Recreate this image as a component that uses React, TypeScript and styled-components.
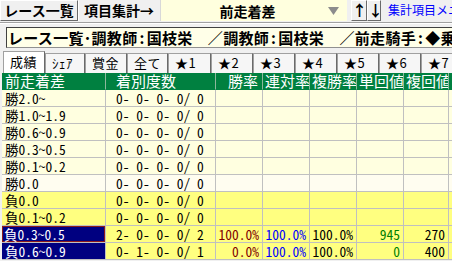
import styled, { createGlobalStyle } from "styled-components";

const GlobalStyle = createGlobalStyle`
  html, body {
    margin: 0;
    background: #f0f0f0;
    font-family: "Noto Sans CJK JP", sans-serif;
  }
`;

interface Row {
  label: string;
  counts: string;
  win?: string;
  quinella?: string;
  place?: string;
  winReturn?: string;
  placeReturn?: string;
  tone: "cream" | "light" | "yellow";
  selected?: boolean;
  focused?: boolean;
}

const rows: Row[] = [
  { label: "勝2.0〜", counts: "0- 0- 0- 0/ 0", tone: "cream" },
  { label: "勝1.0〜1.9", counts: "0- 0- 0- 0/ 0", tone: "cream" },
  { label: "勝0.6〜0.9", counts: "0- 0- 0- 0/ 0", tone: "cream" },
  { label: "勝0.3〜0.5", counts: "0- 0- 0- 0/ 0", tone: "cream" },
  { label: "勝0.1〜0.2", counts: "0- 0- 0- 0/ 0", tone: "cream" },
  { label: "勝0.0", counts: "0- 0- 0- 0/ 0", tone: "light" },
  { label: "負0.0", counts: "0- 0- 0- 0/ 0", tone: "yellow" },
  { label: "負0.1〜0.2", counts: "0- 0- 0- 0/ 0", tone: "yellow" },
  {
    label: "負0.3〜0.5",
    counts: "2- 0- 0- 0/ 2",
    win: "100.0%",
    quinella: "100.0%",
    place: "100.0%",
    winReturn: "945",
    placeReturn: "270",
    tone: "yellow",
    selected: true,
    focused: true,
  },
  {
    label: "負0.6〜0.9",
    counts: "0- 1- 0- 0/ 1",
    win: "0.0%",
    quinella: "100.0%",
    place: "100.0%",
    winReturn: "0",
    placeReturn: "400",
    tone: "yellow",
    selected: true,
  },
];

const tabs = [
  { name: "成績", width: 42 },
  { name: "ｼｪｱ", width: 40 },
  { name: "賞金", width: 42 },
  { name: "全て", width: 41 },
  { name: "★1", width: 43 },
  { name: "★2", width: 42 },
  { name: "★3", width: 42 },
  { name: "★4", width: 42 },
  { name: "★5", width: 42 },
  { name: "★6", width: 42 },
  { name: "★7", width: 42 },
];

const headers = [
  { name: "前走着差", indent: 3 },
  { name: "着別度数", indent: 10 },
  { name: "勝率", indent: 12 },
  { name: "連対率", indent: 2 },
  { name: "複勝率", indent: 2 },
  { name: "単回値", indent: 2 },
  { name: "複回値", indent: 2 },
  { name: "", indent: 0 },
];

const conditions = [
  ["調教師", "国枝栄"],
  ["調教師", "国枝栄"],
  ["前走騎手", "◆乗り替わり"],
];

const toneColor = {
  cream: "#ffffe0",
  light: "#fffdf0",
  yellow: "#ffff80",
};

const App = () => {
  return (
    <Page>
      <GlobalStyle />
      <TopBar>
        <ToolButton $width={78}>レース一覧</ToolButton>
        <FlatButton $width={82}>項目集計→</FlatButton>
        <Select>
          <SelectText>前走着差</SelectText>
          <svg width="11" height="8" viewBox="0 0 11 8">
            <polygon points="0,0 11,0 5.5,8" fill="#8c8c8c" />
          </svg>
        </Select>
        <ArrowButton $width={16}>↑</ArrowButton>
        <ArrowButton $width={14}>↓</ArrowButton>
        <MenuLink>集計項目メニュー</MenuLink>
      </TopBar>
      <Rule />
      <TitleBox>
        レース一覧･
        {conditions.map(([key, value], index) => (
          <span key={index}>
            {index > 0 && "　／"}
            {key}
            <Colon>:</Colon>
            {value}
          </span>
        ))}
      </TitleBox>
      <TabStrip>
        {tabs.map((tab, index) => (
          <Tab key={tab.name} $width={tab.width} $active={index === 0}>
            {tab.name}
          </Tab>
        ))}
      </TabStrip>
      <Grid>
        {headers.map((header, index) => (
          <HeaderCell key={`h-${index}`} $indent={header.indent}>
            {header.name}
          </HeaderCell>
        ))}
        {rows.map((row) => (
          <RowCells key={row.label} row={row} />
        ))}
      </Grid>
    </Page>
  );
};

const RowCells = ({ row }: { row: Row }) => {
  const bg = toneColor[row.tone];
  return (
    <>
      <LabelCell $bg={bg} $selected={!!row.selected} $focused={!!row.focused}>
        {row.label}
      </LabelCell>
      <CountCell $bg={bg}>{row.counts}</CountCell>
      <ValueCell $bg={bg} $color="#800000">{row.win}</ValueCell>
      <ValueCell $bg={bg} $color="#0000ff">{row.quinella}</ValueCell>
      <ValueCell $bg={bg} $color="#000000">{row.place}</ValueCell>
      <ValueCell $bg={bg} $color="#008000">{row.winReturn}</ValueCell>
      <ValueCell $bg={bg} $color="#000000">{row.placeReturn}</ValueCell>
      <ValueCell $bg={bg} $color="#000000" />
    </>
  );
};

const Page = styled.div`
  width: 452px;
  height: 261px;
  overflow: hidden;
`;

const TopBar = styled.div`
  display: flex;
  height: 21px;
  align-items: stretch;
  white-space: nowrap;
  overflow: hidden;
`;

const ToolButton = styled.div<{ $width: number }>`
  width: ${(p) => p.$width}px;
  flex: none;
  box-sizing: border-box;
  border: 1px solid;
  border-color: #ffffff #6a6a6a #6a6a6a #ffffff;
  background: #f0f0f0;
  font-size: 14px;
  font-weight: bold;
  line-height: 19px;
  text-align: center;
  color: #000;
`;

const FlatButton = styled(ToolButton)`
  border-color: #f0f0f0 #f0f0f0 #f0f0f0 #ffffff;
`;

const Select = styled.div`
  width: 187px;
  flex: none;
  box-sizing: border-box;
  display: flex;
  align-items: center;
  padding: 0 8px 0 10px;
  background: #ffffde;
  border-left: 1px solid #d8d8d8;
  svg {
    flex: none;
  }
`;

const SelectText = styled.span`
  flex: 1;
  text-align: center;
  font-size: 14px;
  font-weight: bold;
  color: #000;
  padding-right: 4px;
`;

const ArrowButton = styled(ToolButton)`
  margin-left: ${(p) => (p.$width === 16 ? 4 : 0)}px;
  font-size: 15px;
  line-height: 18px;
`;

const MenuLink = styled.span`
  margin-left: 7px;
  font-size: 12px;
  line-height: 20px;
  color: #0000ff;
`;

const Rule = styled.div`
  margin-top: 1px;
  border-top: 1px solid #a0a0a0;
  border-bottom: 1px solid #ffffff;
`;

const TitleBox = styled.div`
  margin: 3px 0 0 6px;
  height: 21px;
  box-sizing: border-box;
  border: 1px solid #404040;
  border-right: none;
  border-bottom-color: #909090;
  background: #ffffe8;
  padding-left: 1px;
  font-size: 15px;
  font-weight: bold;
  line-height: 19px;
  letter-spacing: 0.3px;
  white-space: nowrap;
  overflow: hidden;
  color: #000;
`;

const Colon = styled.span`
  padding: 0 2px;
`;

const TabStrip = styled.div`
  display: flex;
  align-items: flex-end;
  height: 22px;
  margin-top: 3px;
  padding-left: 3px;
  white-space: nowrap;
  overflow: hidden;
`;

const Tab = styled.div<{ $width: number; $active: boolean }>`
  width: ${(p) => p.$width}px;
  flex: none;
  box-sizing: border-box;
  height: ${(p) => (p.$active ? 22 : 20)}px;
  border: 1px solid #a0a0a0;
  border-bottom: none;
  border-right-color: #6a6a6a;
  background: ${(p) => (p.$active ? "#ffffff" : "#f6f6f6")};
  padding-left: 6px;
  font-size: 13px;
  line-height: ${(p) => (p.$active ? 19 : 18)}px;
  letter-spacing: 0.5px;
  color: #000;
`;

const Grid = styled.div`
  display: grid;
  grid-template-columns: 104px 110px 47px 47px 47px 47px 45px 1fr;
  grid-auto-rows: 17px;
  margin-left: 2px;
  font-feature-settings: "hwid";
`;

const Cell = styled.div`
  box-sizing: border-box;
  border-right: 1px solid #c0c0c0;
  border-bottom: 1px solid #c0c0c0;
  overflow: hidden;
  white-space: pre;
  font-size: 13.5px;
  line-height: 16px;
  color: #000;
`;

const HeaderCell = styled(Cell)<{ $indent: number }>`
  background: #008040;
  border-right-color: #8cb89c;
  border-bottom-color: #008040;
  color: #ffffff;
  font-size: 15px;
  padding-left: ${(p) => p.$indent}px;
`;

const LabelCell = styled(Cell)<{ $bg: string; $selected: boolean; $focused: boolean }>`
  background: ${(p) => (p.$selected ? "#000080" : p.$bg)};
  color: ${(p) => (p.$selected ? "#ffffff" : "#000")};
  padding-left: ${(p) => (p.$focused ? 2 : 3)}px;
  box-shadow: ${(p) => (p.$focused ? "inset 0 0 0 1px #8b1a1a" : "none")};
`;

const CountCell = styled(Cell)<{ $bg: string }>`
  background: ${(p) => p.$bg};
  padding-left: 10px;
`;

const ValueCell = styled(Cell)<{ $bg: string; $color: string }>`
  background: ${(p) => p.$bg};
  color: ${(p) => p.$color};
  text-align: right;
  padding-right: 3px;
`;

export default App;
